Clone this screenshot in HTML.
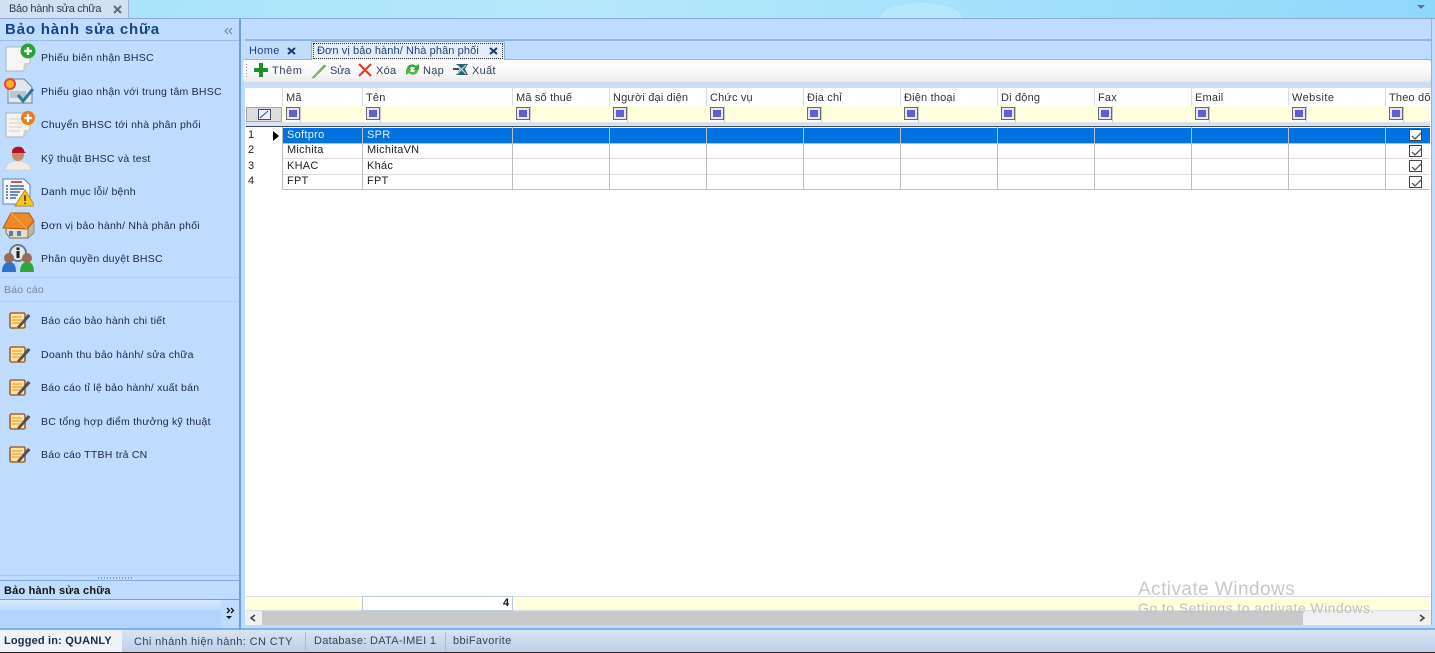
<!DOCTYPE html>
<html><head><meta charset="utf-8"><style>
html,body{margin:0;padding:0;width:1435px;height:653px;overflow:hidden;background:#bfdbff}
body{position:relative;font-family:"Liberation Sans",sans-serif;font-size:11px;color:#1e2a4a}
.a,.t,.l{position:absolute}
.t{white-space:nowrap;line-height:14px;letter-spacing:.3px}
.m{left:41px;color:#1b2748;font-size:10.5px;letter-spacing:.24px}
.ic{position:absolute}
.h{top:91px;color:#333;letter-spacing:.18px}
.r{color:#222;letter-spacing:.25px}
.v{position:absolute;width:1px;background:#bdbdbd;top:127px;height:63px}
.hv{position:absolute;width:1px;background:#d5dee8;top:88px;height:18px}
.f{position:absolute;top:107px;width:14px;height:13px;border:1px solid #67687a;background:#e8e8f4;box-sizing:border-box}
.f:after{content:"";position:absolute;left:2px;top:2px;width:8px;height:7px;background:#5f5fd0}
.fs{position:absolute;top:106px;width:1px;height:16px;background:#c9c9c9}
.c{position:absolute;left:1409px;width:13px;height:12px;border:1px solid #444;background:#fff;box-sizing:border-box}
.c svg{position:absolute;left:1px;top:1px}
.hl{position:absolute;left:282px;width:1148px;height:1px;background:#bdbdbd}
.b{color:#33415e;top:64px}
</style></head><body>
<!-- top bar -->
<div class="a" style="left:0;top:0;width:1435px;height:18px;background:linear-gradient(100deg,#a5e3fb 0%,#b6e8fb 40%,#9fe0fb 75%,#8ed8fb 100%)"></div>
<div class="a" style="left:880px;top:3px;width:82px;height:30px;border-radius:50%;background:#b6e8fc"></div>
<div class="a" style="left:0;top:0;width:129px;height:18px;background:#d2e0f2;border-right:1px solid #9fb5cf;box-sizing:border-box"></div>
<div class="t" style="left:9px;top:2px;color:#2d3b55;letter-spacing:-.3px">Bảo hành sửa chữa</div>
<svg class="ic" style="left:113px;top:5px" width="10" height="9"><path d="M1 1L8 8M8 1L1 8" stroke="#5b6b80" stroke-width="2"/></svg>
<svg class="ic" style="left:1417px;top:5px" width="9" height="5"><path d="M0 0H8L4 4Z" fill="#66708f"/></svg>
<div class="a" style="left:0;top:18px;width:1435px;height:1px;background:#8ba8cf"></div>

<!-- right chrome -->
<div class="a" style="left:241px;top:19px;width:1194px;height:20px;background:#bfdbff;border-bottom:2px solid #93b4e6"></div>
<div class="a" style="left:241px;top:41px;width:1194px;height:18px;background:#bfdbff;border-bottom:1px solid #93b4e6"></div>
<div class="a" style="left:239px;top:19px;width:2px;height:611px;background:#6e9fdc"></div>
<div class="a" style="left:241px;top:19px;width:4px;height:611px;background:#bfdbff"></div>
<div class="a" style="left:1431px;top:19px;width:4px;height:611px;background:#bfdbff;border-left:1px solid #8fb2e2;box-sizing:border-box"></div>

<!-- left panel -->
<div class="t" style="left:5px;top:21px;font-size:15px;font-weight:bold;color:#15428b;line-height:18px;letter-spacing:.82px">Bảo hành sửa chữa</div>
<svg class="ic" style="left:224px;top:27px" width="9" height="8"><path d="M4 1L1 4L4 7M8 1L5 4L8 7" fill="none" stroke="#6b85ad" stroke-width="1.1"/></svg>
<div class="a" style="left:0;top:40px;width:239px;height:1px;background:#99bbe8"></div>

<svg class="ic" style="left:4px;top:43px" width="32" height="30"><path d="M2 4H26V19L19 28H2Z" fill="#f6f6f4" stroke="#a8b4c2"/><path d="M19 28L20 20H27Z" fill="#cfcfcf"/><circle cx="24" cy="8" r="7.5" fill="#2aa52a"/><path d="M24 4V12M20 8H28" stroke="#fff" stroke-width="2.4"/></svg>
<div class="t m" style="top:51px">Phiếu biên nhận BHSC</div>

<svg class="ic" style="left:4px;top:77px" width="30" height="28"><path d="M4 2H20L28 10V26H4Z" fill="#dfe6ee" stroke="#73838f"/><rect x="6" y="14" width="16" height="7" fill="#b7c6d4"/><circle cx="6" cy="7" r="5" fill="#fcb11c" stroke="#e8463a" stroke-width="2"/><path d="M14 18L19 24L29 12" fill="none" stroke="#2d7a96" stroke-width="3"/></svg>
<div class="t m" style="top:85px">Phiếu giao nhận với trung tâm BHSC</div>

<svg class="ic" style="left:4px;top:110px" width="32" height="29"><path d="M2 3H26V19L19 27H2Z" fill="#f4f4f0" stroke="#a8b4c2"/><path d="M5 9H18M5 13H18M5 17H18M5 21H16" stroke="#d5d0c4"/><path d="M19 27L20 20H26Z" fill="#cfcfcf"/><circle cx="24" cy="8" r="7" fill="#ec7c1c"/><path d="M24 4V12M20 8H28" stroke="#fff" stroke-width="2.2"/></svg>
<div class="t m" style="top:118px">Chuyển BHSC tới nhà phân phối</div>

<svg class="ic" style="left:4px;top:143px" width="28" height="29"><path d="M1 27C2 20 8 18 14 18C20 18 26 20 27 27Z" fill="#efece6" stroke="#d5d2cb"/><circle cx="14" cy="12" r="6" fill="#c48a6c"/><path d="M8 9C8 2 20 2 20 8L22 10H8Z" fill="#b5121f"/></svg>
<div class="t m" style="top:152px">Kỹ thuật BHSC và test</div>

<svg class="ic" style="left:2px;top:177px" width="32" height="30"><path d="M1 2H22L28 8V27H1Z" fill="#f4f7fb" stroke="#5f82b8"/><path d="M9 5H20" stroke="#b9303a" stroke-width="1.6"/><path d="M4 9H6M4 12H6M4 15H6M4 18H6M4 21H6M8 9H22M8 12H22M8 15H18M8 18H16M8 21H14" stroke="#41669e" stroke-width="1.4"/><path d="M23 13L33 29H13Z" fill="#f6c629" stroke="#b38a1a"/><path d="M23 18V24M23 25.5V27" stroke="#40300a" stroke-width="1.5"/></svg>
<div class="t m" style="top:185px">Danh mục lỗi/ bệnh</div>

<svg class="ic" style="left:2px;top:211px" width="33" height="28"><path d="M4 14H26V27H8L4 22Z" fill="#e8ddc9" stroke="#7a6a55"/><path d="M26 14L32 10V22L26 27Z" fill="#c4b59d" stroke="#7a6a55" stroke-width=".6"/><path d="M1 17L9 2H27L32 10L25 18Z" fill="#ed8a24" stroke="#b05a12"/><path d="M9 2L25 18" stroke="#f7a94f"/><rect x="7" y="20" width="4" height="5" fill="#5a7fae"/><rect x="15" y="20" width="4" height="5" fill="#5a7fae"/></svg>
<div class="t m" style="top:219px">Đơn vị bảo hành/ Nhà phân phối</div>

<svg class="ic" style="left:1px;top:244px" width="35" height="29"><circle cx="17" cy="9" r="8" fill="#dfe7ef" stroke="#6d7c88" stroke-width="2"/><rect x="15.5" y="7" width="3" height="7" fill="#1d1d1d"/><rect x="15.5" y="3.5" width="3" height="2.5" fill="#1d1d1d"/><path d="M1 28C1 20 5 18 8 18C12 18 15 20 15 28Z" fill="#2e72c9"/><circle cx="8" cy="14" r="5" fill="#9c6a4f"/><path d="M19 28C19 20 23 18 26 18C30 18 33 20 33 28Z" fill="#2ea83c"/><circle cx="26" cy="14" r="5" fill="#9c6a4f"/></svg>
<div class="t m" style="top:252px">Phân quyền duyệt BHSC</div>

<div class="a" style="left:0;top:277px;width:239px;height:1px;background:#add0fa"></div>
<div class="t" style="left:4px;top:283px;color:#7b8699;font-size:10.5px;letter-spacing:.2px">Báo cáo</div>
<div class="a" style="left:0;top:301px;width:239px;height:1px;background:#add0fa"></div>

<svg style="position:absolute;width:0;height:0"><defs><symbol id="rp" viewBox="0 0 22 17"><rect x="1" y="1" width="15" height="15" rx="1.5" fill="#fde3a0" stroke="#a0623a" stroke-width="1.6"/><path d="M3 5H13M3 8H13M3 11H11" stroke="#eda53c" stroke-width="1.3"/><path d="M8 15L19 2L21.5 4L10.5 16Z" fill="#4c4f53"/></symbol></defs></svg>
<svg class="ic" style="left:9px;top:312px" width="22" height="17"><use href="#rp"/></svg>
<div class="t m" style="top:314px">Báo cáo bảo hành chi tiết</div>
<svg class="ic" style="left:9px;top:346px" width="22" height="17"><use href="#rp"/></svg>
<div class="t m" style="top:348px">Doanh thu bảo hành/ sửa chữa</div>
<svg class="ic" style="left:9px;top:379px" width="22" height="17"><use href="#rp"/></svg>
<div class="t m" style="top:381px">Báo cáo tỉ lệ bảo hành/ xuất bán</div>
<svg class="ic" style="left:9px;top:413px" width="22" height="17"><use href="#rp"/></svg>
<div class="t m" style="top:415px">BC tổng hợp điểm thưởng kỹ thuật</div>
<svg class="ic" style="left:9px;top:446px" width="22" height="17"><use href="#rp"/></svg>
<div class="t m" style="top:448px">Báo cáo TTBH trả CN</div>

<div class="a" style="left:0;top:575px;width:239px;height:1px;background:#a6c6f2"></div>
<div class="a" style="left:98px;top:577px;width:34px;height:2px;background:repeating-linear-gradient(90deg,#7f9cc8 0 1px,transparent 1px 3px)"></div>
<div class="a" style="left:0;top:580px;width:239px;height:1px;background:#7fa6dd"></div>
<div class="t" style="left:4px;top:584px;font-weight:bold;color:#111;letter-spacing:.2px">Bảo hành sửa chữa</div>
<div class="a" style="left:0;top:599px;width:239px;height:1px;background:#6e9fdc"></div>
<div class="a" style="left:0;top:600px;width:221px;height:10px;background:linear-gradient(#d7e8fe,#c0dcff)"></div>
<div class="a" style="left:0;top:610px;width:239px;height:20px;background:#b4d4fe"></div>
<div class="a" style="left:221px;top:600px;width:18px;height:30px;background:#bfdbff"></div>
<svg class="ic" style="left:226px;top:607px" width="9" height="7"><path d="M1 1L3.5 3.5L1 6M5 1L7.5 3.5L5 6" fill="none" stroke="#111" stroke-width="1.3"/></svg>
<svg class="ic" style="left:226px;top:616px" width="7" height="4"><path d="M0 0H6L3 3Z" fill="#111"/></svg>

<!-- doc tabs -->
<div class="a" style="left:241px;top:41px;width:70px;height:18px;background:#c3dcfb"></div>
<div class="t" style="left:249px;top:44px;color:#23407a;letter-spacing:.35px">Home</div>
<svg class="ic" style="left:287px;top:47px" width="10" height="8"><path d="M1 1L8 7M8 1L1 7" stroke="#17386d" stroke-width="2"/></svg>
<div class="a" style="left:311px;top:41px;width:194px;height:19px;background:#e4eefb;border:1px solid #8fb0dc;border-bottom:0;box-sizing:border-box;border-radius:2px 2px 0 0"></div>
<div class="a" style="left:313px;top:43px;width:190px;height:16px;border:1px dotted #333;box-sizing:border-box"></div>
<div class="t" style="left:317px;top:44px;color:#23407a;letter-spacing:.1px">Đơn vị bảo hành/ Nhà phân phối</div>
<svg class="ic" style="left:489px;top:47px" width="10" height="8"><path d="M1 1L8 7M8 1L1 7" stroke="#17386d" stroke-width="2"/></svg>

<!-- toolbar -->
<div class="a" style="left:243px;top:60px;width:1188px;height:22px;background:linear-gradient(#fff,#f5f5f5 70%,#e9e9e9);border-radius:3px"></div>
<div class="a" style="left:246px;top:64px;width:1px;height:14px;background:repeating-linear-gradient(#999 0 1px,transparent 1px 3px)"></div>
<div class="a" style="left:245px;top:82px;width:1186px;height:6px;background:#cddcf0"></div>
<svg class="ic" style="left:254px;top:63px" width="14" height="14"><path d="M5 0H9V5H14V9H9V14H5V9H0V5H5Z" fill="#1f8f2b"/></svg>
<div class="t b" style="left:272px;letter-spacing:.6px">Thêm</div>
<svg class="ic" style="left:311px;top:63px" width="16" height="16"><path d="M1 15L13 2L15 3L3 15Z" fill="#86bd67" stroke="#6ea54f" stroke-width=".6"/></svg>
<div class="t b" style="left:330px;letter-spacing:-.2px">Sửa</div>
<svg class="ic" style="left:358px;top:63px" width="14" height="14"><path d="M1 1L13 13M13 1L1 13" stroke="#e2391f" stroke-width="2"/></svg>
<div class="t b" style="left:376px;letter-spacing:.3px">Xóa</div>
<svg class="ic" style="left:405px;top:62px" width="15" height="15"><path d="M2 7C2 2 9 1 11 4L14 2V8H8L10 6C8 4 5 5 5 7Z" fill="#36a93b"/><path d="M13 8C13 13 6 14 4 11L1 13V7H7L5 9C7 11 10 10 10 8Z" fill="#52b84f"/></svg>
<div class="t b" style="left:423px;letter-spacing:.3px">Nạp</div>
<svg class="ic" style="left:453px;top:63px" width="16" height="13"><path d="M3 1H15L12 6L15 12H3L7 6Z" fill="#2e5f73"/><path d="M4 2L13 11M13 2L4 11" stroke="#bfe6ef" stroke-width="1.2"/><path d="M0 6H6" stroke="#111" stroke-width="1.5"/></svg>
<div class="t b" style="left:472px;letter-spacing:.3px">Xuất</div>

<!-- grid -->
<div class="a" style="left:245px;top:88px;width:1186px;height:537px;background:#fff"></div>
<div class="a" style="left:282px;top:106px;width:1148px;height:16px;background:#ffffe0"></div>
<div class="a" style="left:246px;top:107px;width:36px;height:15px;background:#dcdcdc;border:1px solid #a6a6a6;box-sizing:border-box"></div>
<svg class="ic" style="left:258px;top:109px" width="13" height="11"><rect x=".5" y=".5" width="12" height="10" fill="#eef" stroke="#404a6b"/><path d="M2 9L10 2" stroke="#404a6b"/></svg>
<div class="a" style="left:246px;top:122px;width:1184px;height:5px;background:#dfe0ee;border-bottom:1px solid #3c4a7c;box-sizing:border-box"></div>

<div class="hv" style="left:282px"></div><div class="hv" style="left:362px"></div><div class="hv" style="left:512px"></div><div class="hv" style="left:609px"></div><div class="hv" style="left:706px"></div><div class="hv" style="left:803px"></div><div class="hv" style="left:900px"></div><div class="hv" style="left:997px"></div><div class="hv" style="left:1094px"></div><div class="hv" style="left:1191px"></div><div class="hv" style="left:1288px"></div><div class="hv" style="left:1385px"></div>

<div class="t h" style="left:286px">Mã</div>
<div class="t h" style="left:366px">Tên</div>
<div class="t h" style="left:516px">Mã số thuế</div>
<div class="t h" style="left:613px">Người đại diện</div>
<div class="t h" style="left:710px">Chức vụ</div>
<div class="t h" style="left:807px">Địa chỉ</div>
<div class="t h" style="left:904px">Điện thoại</div>
<div class="t h" style="left:1001px">Di động</div>
<div class="t h" style="left:1098px">Fax</div>
<div class="t h" style="left:1195px">Email</div>
<div class="t h" style="left:1292px;letter-spacing:.4px">Website</div>
<div class="a" style="left:1386px;top:88px;width:44px;height:18px;overflow:hidden"><div class="t" style="left:3px;top:3px;color:#333;letter-spacing:.18px">Theo dõi</div></div>

<div class="f" style="left:286px"></div><div class="fs" style="left:300px"></div>
<div class="f" style="left:366px"></div><div class="fs" style="left:380px"></div>
<div class="f" style="left:516px"></div><div class="fs" style="left:530px"></div>
<div class="f" style="left:613px"></div><div class="fs" style="left:627px"></div>
<div class="f" style="left:710px"></div><div class="fs" style="left:724px"></div>
<div class="f" style="left:807px"></div><div class="fs" style="left:821px"></div>
<div class="f" style="left:904px"></div><div class="fs" style="left:918px"></div>
<div class="f" style="left:1001px"></div><div class="fs" style="left:1015px"></div>
<div class="f" style="left:1098px"></div><div class="fs" style="left:1112px"></div>
<div class="f" style="left:1195px"></div><div class="fs" style="left:1209px"></div>
<div class="f" style="left:1292px"></div><div class="fs" style="left:1306px"></div>
<div class="f" style="left:1389px"></div><div class="fs" style="left:1403px"></div>

<div class="a" style="left:283px;top:128px;width:1147px;height:15px;background:#0073de"></div>
<div class="hl" style="top:143px"></div><div class="hl" style="top:158px;background:#ddd"></div><div class="hl" style="top:174px;background:#ddd"></div><div class="hl" style="top:189px"></div>
<div class="v" style="left:282px"></div><div class="v" style="left:362px"></div><div class="v" style="left:512px"></div><div class="v" style="left:609px"></div><div class="v" style="left:706px"></div><div class="v" style="left:803px"></div><div class="v" style="left:900px"></div><div class="v" style="left:997px"></div><div class="v" style="left:1094px"></div><div class="v" style="left:1191px"></div><div class="v" style="left:1288px"></div><div class="v" style="left:1385px"></div>

<svg class="ic" style="left:273px;top:131px" width="6" height="10"><path d="M0 0L6 5L0 10Z" fill="#000"/></svg>
<div class="t r" style="left:248px;top:128px">1</div>
<div class="t r" style="left:248px;top:143px">2</div>
<div class="t r" style="left:248px;top:159px">3</div>
<div class="t r" style="left:248px;top:174px">4</div>
<div class="t" style="left:287px;top:128px;color:#e6f0fb">Softpro</div>
<div class="t" style="left:367px;top:128px;color:#e6f0fb">SPR</div>
<div class="t r" style="left:287px;top:143px">Michita</div>
<div class="t r" style="left:367px;top:143px">MichitaVN</div>
<div class="t r" style="left:287px;top:159px">KHAC</div>
<div class="t r" style="left:367px;top:159px">Khác</div>
<div class="t r" style="left:287px;top:174px">FPT</div>
<div class="t r" style="left:367px;top:174px">FPT</div>

<div class="c" style="top:129px"><svg width="11" height="10"><path d="M1 5L4 8L10 2" fill="none" stroke="#555" stroke-width="1.3"/></svg></div>
<div class="c" style="top:145px"><svg width="11" height="10"><path d="M1 5L4 8L10 2" fill="none" stroke="#555" stroke-width="1.3"/></svg></div>
<div class="c" style="top:160px"><svg width="11" height="10"><path d="M1 5L4 8L10 2" fill="none" stroke="#555" stroke-width="1.3"/></svg></div>
<div class="c" style="top:176px"><svg width="11" height="10"><path d="M1 5L4 8L10 2" fill="none" stroke="#555" stroke-width="1.3"/></svg></div>

<!-- footer -->
<div class="a" style="left:246px;top:596px;width:1184px;height:15px;background:#ffffdc;border-top:1px solid #d5e0ea;border-bottom:1px solid #d5e0ea;box-sizing:border-box"></div>
<div class="a" style="left:362px;top:596px;width:151px;height:15px;background:#fff;border:1px solid #b9cbe0;box-sizing:border-box"></div>
<div class="t" style="left:503px;top:596px;font-weight:bold;color:#111">4</div>

<!-- scrollbar -->
<div class="a" style="left:245px;top:611px;width:1186px;height:14px;background:#f0f0f0"></div>
<div class="a" style="left:262px;top:611px;width:1041px;height:14px;background:#c9c9c9"></div>
<svg class="ic" style="left:250px;top:614px" width="6" height="8"><path d="M5 1L1 4L5 7" fill="none" stroke="#444" stroke-width="1.6"/></svg>
<svg class="ic" style="left:1419px;top:614px" width="6" height="8"><path d="M1 1L5 4L1 7" fill="none" stroke="#444" stroke-width="1.6"/></svg>
<div class="a" style="left:241px;top:625px;width:1194px;height:5px;background:#bfdbff;border-bottom:2px solid #7fb0e8;box-sizing:border-box"></div>
<div class="a" style="left:0;top:628px;width:239px;height:2px;background:#7fb0e8"></div>

<!-- watermark -->
<div class="t" style="left:1138px;top:579px;font-size:19px;line-height:22px;color:#c8c8c8;letter-spacing:.45px">Activate Windows</div>
<div class="t" style="left:1138px;top:600px;font-size:14px;line-height:17px;color:#c0c0c0;letter-spacing:.45px">Go to Settings to activate Windows.</div>

<!-- status bar -->
<div class="a" style="left:0;top:630px;width:1435px;height:22px;background:linear-gradient(#d8e5f5,#bfcfe6)"></div>
<div class="a" style="left:0;top:652px;width:1435px;height:1px;background:#222"></div>
<div class="a" style="left:0;top:630px;width:122px;height:22px;background:#eff2f6"></div>
<div class="t" style="left:4px;top:634px;font-weight:bold;color:#1b2d4a;letter-spacing:.18px">Logged in: QUANLY</div>
<div class="t" style="left:134px;top:635px;color:#2e4165;letter-spacing:.38px">Chi nhánh hiện hành: CN CTY</div>
<div class="a" style="left:305px;top:632px;width:1px;height:18px;background:#a9bad2"></div>
<div class="t" style="left:314px;top:634px;color:#2e4165;letter-spacing:.28px">Database: DATA-IMEI 1</div>
<div class="a" style="left:445px;top:632px;width:1px;height:18px;background:#a9bad2"></div>
<div class="t" style="left:453px;top:634px;color:#2e4165;letter-spacing:.38px">bbiFavorite</div>
</body></html>
